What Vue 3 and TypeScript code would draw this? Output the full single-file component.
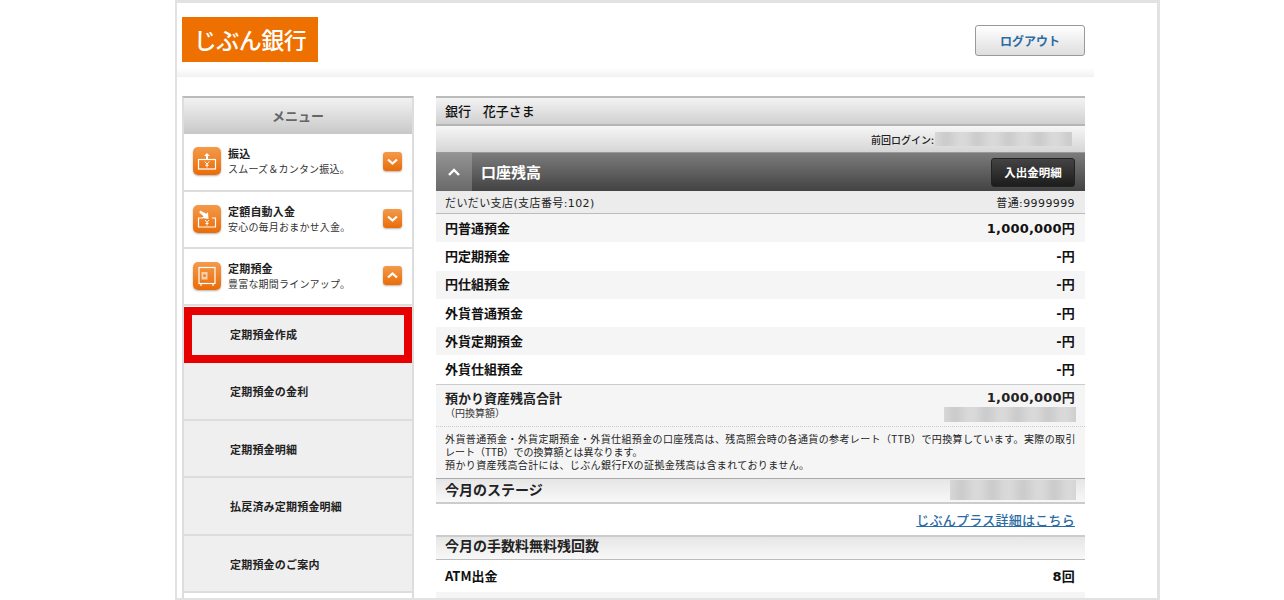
<script setup lang="ts">
interface MenuItem { title: string; sub: string; open: boolean; icon: string }
const menu: MenuItem[] = [
  { title: '振込', sub: 'スムーズ\uFF06カンタン振込。', open: false, icon: 'transfer' },
  { title: '定額自動入金', sub: '安心の毎月おまかせ入金。', open: false, icon: 'auto' },
  { title: '定期預金', sub: '豊富な期間ラインアップ。', open: true, icon: 'safe' },
]
const subs = [
  { label: '定期預金作成', active: true },
  { label: '定期預金の金利', active: false },
  { label: '定期預金明細', active: false },
  { label: '払戻済み定期預金明細', active: false },
  { label: '定期預金のご案内', active: false },
]
const balances = [
  { label: '円普通預金', value: '1,000,000円' },
  { label: '円定期預金', value: '-円' },
  { label: '円仕組預金', value: '-円' },
  { label: '外貨普通預金', value: '-円' },
  { label: '外貨定期預金', value: '-円' },
  { label: '外貨仕組預金', value: '-円' },
]
</script>

<template>
  <div class="shell">
    <header class="top">
      <div class="logo">じぶん銀行</div>
      <button class="logout">ログアウト</button>
    </header>
    <div class="body">
      <nav class="menu">
        <div class="menu-head">メニュー</div>
        <div v-for="(m, i) in menu" :key="m.title" class="menu-item" :class="{ first: i === 0 }">
          <span class="m-icon">
            <svg v-if="m.icon === 'transfer'" viewBox="0 0 28 28" width="28" height="28" fill="none" stroke="#fff">
              <rect x="5.500" y="12.500" width="17" height="9.500" stroke-width="1.200" />
              <path d="M14 6l-3 3h2v3.500h2V9h2z" fill="#fff" stroke="none" />
              <path d="M11.800 14.500l2.200 2.600 2.200-2.600M14 17v3.500M12.300 18.200h3.400" stroke-width="1" />
            </svg>
            <svg v-else-if="m.icon === 'auto'" viewBox="0 0 28 28" width="28" height="28" fill="none" stroke="#fff">
              <path d="M10 13H5.500v9h17v-9H19" stroke-width="1.200" />
              <path d="M7 5.500l6.500 3.200 1.500-1.700.5 7-6.500-1 1.600-1.700-4.200-3.500z" fill="#fff" stroke="none" />
              <path d="M12 15l2 2.300 2-2.300M14 17.300v3.200M12.500 18.500h3" stroke-width="1" />
            </svg>
            <svg v-else viewBox="0 0 28 28" width="28" height="28" fill="none" stroke="#fff">
              <rect x="6" y="5.500" width="16" height="16" stroke-width="1.200" />
              <rect x="8.500" y="10" width="6" height="7.500" fill="#f8d2ad" stroke="none" />
              <circle cx="11.500" cy="13.700" r="1.400" fill="#ee7f20" stroke="none" />
              <path d="M8 21.500v2.500M20 21.500v2.500" stroke-width="1.200" />
            </svg>
          </span>
          <span class="m-text">
            <strong>{{ m.title }}</strong>
            <span>{{ m.sub }}</span>
          </span>
          <span class="m-toggle">
            <svg viewBox="0 0 19 19" width="19" height="19" fill="none" stroke="#fff" stroke-width="2.200">
              <path :d="m.open ? 'M5 11.500l4.500-4 4.500 4' : 'M5 7.500l4.500 4 4.500-4'" />
            </svg>
          </span>
        </div>
        <a v-for="s in subs" :key="s.label" class="sub" :class="{ active: s.active }">{{ s.label }}</a>
      </nav>

      <main class="main">
        <div class="name-bar">銀行&nbsp;&nbsp;&nbsp;&nbsp;花子さま</div>
        <div class="login-bar">
          <span>前回ログイン:</span>
          <i class="blur login-blur"></i>
        </div>
        <div class="acct-bar">
          <span class="acct-toggle">
            <svg viewBox="0 0 14 10" width="14" height="10" fill="none" stroke="#fff" stroke-width="2.400">
              <path d="M2 8l5-5 5 5" />
            </svg>
          </span>
          <h2>口座残高</h2>
          <button class="detail-btn">入出金明細</button>
        </div>
        <div class="branch">
          <span>だいだい支店(支店番号:102)</span>
          <span>普通:9999999</span>
        </div>
        <div v-for="b in balances" :key="b.label" class="row">
          <b>{{ b.label }}</b>
          <b class="num">{{ b.value }}</b>
        </div>
        <div class="total">
          <div>
            <b>預かり資産残高合計</b>
            <small>&#xFF08;円換算額&#xFF09;</small>
          </div>
          <div class="total-val">
            <b class="num">1,000,000円</b>
            <i class="blur total-blur"></i>
          </div>
        </div>
        <div class="note">
          <span class="wide">外貨普通預金・外貨定期預金・外貨仕組預金の口座残高は、残高照会時の各通貨の参考レート&#xFF08;TTB&#xFF09;で円換算しています。実際の取引</span>
          <span>レート&#xFF08;TTB&#xFF09;での換算額とは異なります。</span>
          <span class="third">預かり資産残高合計には、じぶん銀行FXの証拠金残高は含まれておりません。</span>
        </div>
        <div class="section stage">
          <b>今月のステージ</b>
          <i class="blur stage-blur"></i>
        </div>
        <div class="link-row"><a>じぶんプラス詳細はこちら</a></div>
        <div class="section fee"><b>今月の手数料無料残回数</b></div>
        <div class="row atm">
          <b>ATM出金</b>
          <b class="num">8回</b>
        </div>
        <div class="row next"></div>
      </main>
    </div>
  </div>
</template>

<style>
html, body { background: #fff; }
</style>

<style scoped>
* { box-sizing: border-box; }
.shell {
  width: 985px;
  height: 600px;
  margin-left: 175px;
  border: 3px solid #e2e2e2;
  border-width: 3px 3px 2px 2px;
  overflow: hidden;
  font-family: "Noto Sans CJK JP", "Liberation Sans", sans-serif;
  color: #222;
  background: #fff;
}
.top {
  width: 917px;
  height: 74px;
  display: flex;
  align-items: flex-start;
  justify-content: space-between;
  padding: 14px 9px 0 5px;
  background: linear-gradient(to bottom, #fff 0, #fff 65px, #f1f1f1 74px);
}
.logo {
  width: 136px;
  height: 45px;
  background: #ee7000;
  color: #fff;
  font-size: 23px;
  font-weight: 500;
  line-height: 44px;
  text-align: center;
  letter-spacing: -0.5px;
}
.logout {
  width: 110px;
  height: 31px;
  margin-top: 8px;
  border: 1px solid #999;
  border-radius: 3px;
  background: linear-gradient(to bottom, #fff, #dedede);
  color: #2b6ca3;
  font: 700 12px "Noto Sans CJK JP", sans-serif;
}
.body {
  display: flex;
  gap: 22px;
  padding: 19px 0 0 5px;
}
.menu {
  width: 232px;
  flex: none;
  border: 2px solid #ddd;
  border-top: 2px solid #bbb;
  border-bottom: 0;
}
.menu-head {
  height: 36px;
  background: linear-gradient(to bottom, #f2f2f2, #c8c8c8);
  color: #666;
  font-size: 13px;
  font-weight: 700;
  line-height: 36px;
  text-align: center;
}
.menu-item {
  height: 57px;
  display: flex;
  align-items: center;
  padding: 0 10px 2px 9px;
  border-bottom: 2px solid #ddd;
  background: #fff;
}
.menu-item.first { height: 58px; }
.m-icon {
  width: 28px;
  height: 28px;
  flex: none;
  border-radius: 5px;
  background: linear-gradient(to bottom, #f49a4a, #e96c08);
  box-shadow: 0 1px 2px rgba(0, 0, 0, .3);
}
.m-icon svg, .m-toggle svg { display: block; }
.m-text {
  flex: 1;
  display: flex;
  flex-direction: column;
  padding-left: 7px;
  font-size: 10px;
  line-height: 15px;
  letter-spacing: .2px;
  color: #333;
  white-space: nowrap;
}
.m-text strong {
  font-size: 11px;
  color: #222;
}
.m-toggle {
  width: 19px;
  height: 19px;
  flex: none;
  border-radius: 3px;
  background: linear-gradient(to bottom, #f49a4a, #e96c08);
  box-shadow: 0 1px 2px rgba(0, 0, 0, .3);
}
.sub {
  display: block;
  height: 57.500px;
  padding: 1px 0 0 46px;
  border-bottom: 2px solid #ddd;
  background: #efefef;
  color: #222;
  font-size: 11px;
  font-weight: 700;
  line-height: 55px;
  letter-spacing: .2px;
}
.sub.active {
  height: 56px;
  margin-top: 1px;
  padding: 0 0 0 38px;
  border: 8px solid #e60000;
  line-height: 38px;
}
.main { width: 649px; flex: none; }
.name-bar {
  height: 30px;
  border-top: 2px solid #bbb;
  border-bottom: 2px solid #b5b5b5;
  background: linear-gradient(to bottom, #f3f3f3, #d0d0d0);
  padding-left: 9px;
  font-size: 13px;
  font-weight: 500;
  line-height: 25px;
  color: #111;
}
.login-bar {
  height: 27px;
  display: flex;
  align-items: center;
  justify-content: flex-end;
  padding-right: 13px;
  background: linear-gradient(to bottom, #f6f6f6, #d6d6d6);
  border-bottom: 1px solid #999;
  font-size: 10px;
  font-weight: 500;
}
.blur {
  display: block;
  position: relative;
  overflow: hidden;
  background: #d4d4d4;
}
.blur::before {
  content: "";
  position: absolute;
  inset: -8px;
  filter: blur(4px);
  background: repeating-linear-gradient(to right, #dcdcdc 0, #d8d8d8 10px, #c6c6c6 19px, #dadada 31px);
}
.login-blur { width: 137px; height: 14px; margin-left: 1px; }
.acct-bar {
  height: 38px;
  display: flex;
  align-items: center;
  background: linear-gradient(to bottom, #7c7c7c, #434343);
  padding-right: 10px;
}
.acct-toggle {
  width: 36px;
  height: 100%;
  display: flex;
  align-items: center;
  justify-content: center;
  background: linear-gradient(to bottom, #949494, #696969);
}
.acct-bar h2 {
  flex: 1;
  margin: 0;
  padding: 0 0 2px 9px;
  color: #fff;
  font-size: 15px;
  font-weight: 700;
}
.detail-btn {
  width: 84px;
  height: 29px;
  border: 1px solid #222;
  border-radius: 3px;
  background: linear-gradient(to bottom, #444, #1c1c1c);
  color: #fff;
  font: 700 11.500px "Noto Sans CJK JP", sans-serif;
}
.branch {
  height: 23px;
  display: flex;
  justify-content: space-between;
  align-items: center;
  padding: 0 10px 0 9px;
  background: #ececec;
  border-bottom: 1px solid #bbb;
  font-family: "DejaVu Sans", "Noto Sans CJK JP", sans-serif;
  font-size: 11px;
  letter-spacing: .4px;
}
.row {
  height: 28.300px;
  display: flex;
  justify-content: space-between;
  align-items: center;
  padding: 0 10px 2px 9px;
  font-size: 13px;
}
.row b { font-weight: 700; color: #111; }
.row:nth-of-type(odd) { background: #f5f5f5; }
.num {
  font-family: "DejaVu Sans", "Noto Sans CJK JP", sans-serif;
  font-size: 13px;
  font-weight: 700;
  letter-spacing: .2px;
}
.total {
  height: 43px;
  display: flex;
  justify-content: space-between;
  padding: 4px 10px 0 9px;
  background: #f5f5f5;
  border-top: 1px solid #ccc;
  border-bottom: 1px dotted #ccc;
  font-size: 13px;
  line-height: 17px;
}
.total b { display: block; }
.total small {
  display: block;
  margin-top: 1px;
  font-size: 10px;
  line-height: 12px;
  color: #333;
}
.total-val { text-align: right; }
.total-blur { width: 132px; height: 15px; margin: 1px -1px 0 0; }
.note {
  height: 51px;
  padding: 5px 0 0 9px;
  background: #f5f5f5;
  font-size: 10px;
  line-height: 13px;
  color: #222;
  white-space: nowrap;
}
.note span { display: block; }
.note .wide { letter-spacing: .38px; }
.note .third { letter-spacing: .4px; }
.section {
  display: flex;
  align-items: center;
  justify-content: space-between;
  background: linear-gradient(to bottom, #e6e6e6, #f8f8f8);
  padding: 0 9px 2px;
  font-size: 14px;
}
.stage {
  height: 26px;
  border-top: 1px solid #aaa;
  border-bottom: 2px solid #ccc;
}
.stage-blur { width: 126px; height: 20px; margin: 2px 0 0; }
.link-row {
  height: 31px;
  padding-right: 10px;
  text-align: right;
  line-height: 32px;
  font-size: 13px;
  font-weight: 500;
  letter-spacing: .25px;
}
.link-row a { color: #2b6ca3; text-decoration: underline; }
.fee {
  height: 25px;
  padding-bottom: 5px;
  border-top: 2px solid #ccc;
  border-bottom: 1px solid #bbb;
}
.atm { height: 32px; padding-bottom: 0; background: #fff !important; }
.next { height: 20px; background: #f5f5f5 !important; }
</style>
